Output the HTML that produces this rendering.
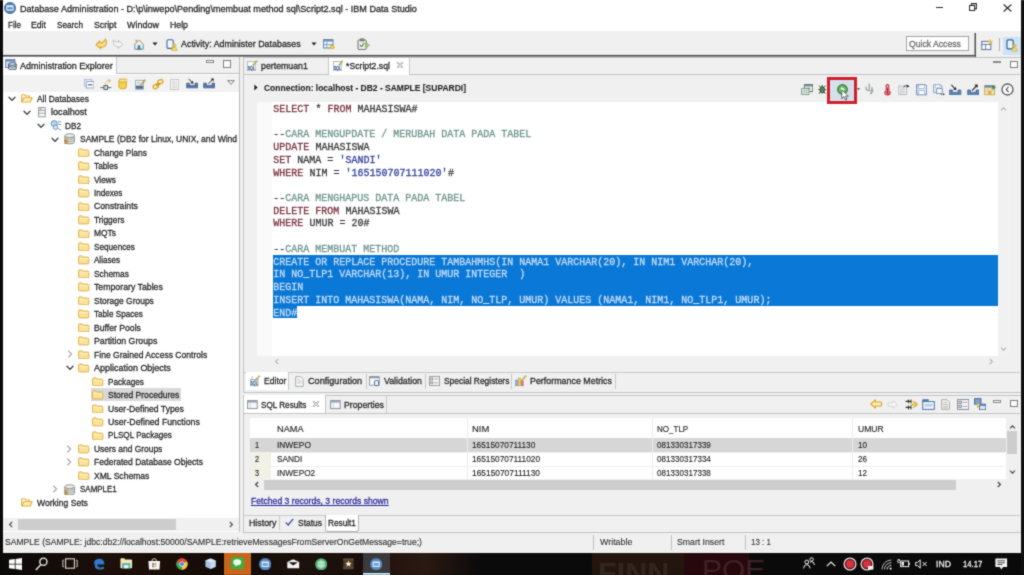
<!DOCTYPE html>
<html><head><meta charset="utf-8"><title>IBM Data Studio</title><style>
html,body{margin:0;padding:0}
body{width:1024px;height:575px;position:relative;overflow:hidden;background:#0a0a0a;font-family:"Liberation Sans",sans-serif;color:#222}
#w{position:absolute;left:0;top:-6px;width:1024px;height:587px;background:linear-gradient(#fff 0,#fff 20px,#0a0a0a 575px);filter:url(#sb)}
#c{position:absolute;left:0;top:6px;width:1024px;height:575px;background:#f0f0f0}
.b{position:absolute;display:block}
.t{position:absolute;white-space:pre;line-height:12px;transform-origin:0 50%;font-size:9.4px;-webkit-text-stroke:0.28px currentColor}
.m{font-family:"Liberation Mono",monospace}
</style></head><body>
<svg width="0" height="0" style="position:absolute"><filter id="sb" x="0" y="0" width="100%" height="100%" color-interpolation-filters="sRGB"><feConvolveMatrix order="3" kernelMatrix="0.03 0.1 0.03 0.1 0.48 0.1 0.03 0.1 0.03" divisor="1" edgeMode="duplicate" preserveAlpha="true"/></filter></svg>
<div id="w"><div id="c">
<div class="b" style="left:0px;top:0px;width:1024px;height:31px;background:#ffffff;"></div>
<div class="b" style="left:0px;top:31px;width:1024px;height:24px;background:#f0f0f0;"></div>
<div class="b" style="left:3px;top:55px;width:973px;height:1px;background:#505050;"></div>
<div class="b" style="left:3px;top:56px;width:973px;height:1px;background:#8c8c8c;"></div>
<div class="b" style="left:3px;top:54px;width:971px;height:1px;background:#e4e4e4;"></div>
<div class="b" style="left:975px;top:33px;width:1px;height:24px;background:#505050;"></div>
<div class="b" style="left:974px;top:33px;width:1px;height:22px;background:#a0a0a0;"></div>
<span class="t" style="left:20px;top:3.20px;font-size:9.4px;color:#262626;transform:scaleX(0.9691);">Database Administration - D:\p\inwepo\Pending\membuat method sql\Script2.sql - IBM Data Studio</span>
<span class="t" style="left:8px;top:18.70px;font-size:9.4px;color:#262626;transform:scaleX(0.8582);">File</span>
<span class="t" style="left:31px;top:18.70px;font-size:9.4px;color:#262626;transform:scaleX(0.9260);">Edit</span>
<span class="t" style="left:57px;top:18.70px;font-size:9.4px;color:#262626;transform:scaleX(0.8729);">Search</span>
<span class="t" style="left:93.5px;top:18.70px;font-size:9.4px;color:#262626;transform:scaleX(0.9364);">Script</span>
<span class="t" style="left:127px;top:18.70px;font-size:9.4px;color:#262626;transform:scaleX(0.9571);">Window</span>
<span class="t" style="left:170px;top:18.70px;font-size:9.4px;color:#262626;transform:scaleX(0.9310);">Help</span>
<span class="t" style="left:181px;top:38.20px;font-size:9.4px;color:#262626;transform:scaleX(0.9491);">Activity: Administer Databases</span>
<div class="b" style="left:905.5px;top:35.5px;width:63px;height:15.5px;background:#ffffff;border:1px solid #a5a5a5;box-sizing:border-box;"></div>
<span class="t" style="left:909px;top:37.70px;font-size:9.4px;color:#6a6a6a;transform:scaleX(0.9217);">Quick Access</span>
<div class="b" style="left:998.5px;top:38px;width:1px;height:13px;background:#b0b0b0;"></div>
<div class="b" style="left:1003px;top:36.5px;width:18.5px;height:18px;background:#cfe3f5;"></div>
<div class="b" style="left:3px;top:57px;width:237px;height:475px;background:#ffffff;"></div>
<div class="b" style="left:3px;top:57px;width:237px;height:16.5px;background:#f0f0f0;"></div>
<div class="b" style="left:3px;top:57px;width:112.5px;height:17px;background:#ffffff;"></div>
<div class="b" style="left:115.5px;top:57px;width:1px;height:16px;background:#c8c8c8;"></div>
<div class="b" style="left:115.5px;top:73px;width:124px;height:1px;background:#c0c0c0;"></div>
<div class="b" style="left:239px;top:57px;width:1px;height:475px;background:#bcbcbc;"></div>
<div class="b" style="left:3px;top:75px;width:236px;height:17px;background:#f2f2f3;"></div>
<span class="t" style="left:20px;top:59.70px;font-size:9.4px;color:#262626;transform:scaleX(0.9570);">Administration Explorer</span>
<div class="b" style="left:90.5px;top:388.14000000000004px;width:90px;height:13.3px;background:#d9d9d9;"></div>
<span class="t" style="left:37px;top:92.70px;font-size:9.4px;color:#262626;transform:scaleX(0.8966);">All Databases</span>
<span class="t" style="left:51px;top:106.17px;font-size:9.4px;color:#262626;transform:scaleX(0.9703);">localhost</span>
<span class="t" style="left:65px;top:119.64px;font-size:9.4px;color:#262626;transform:scaleX(0.8750);">DB2</span>
<span class="t" style="left:79.5px;top:133.11px;font-size:9.4px;color:#262626;transform:scaleX(0.9080);">SAMPLE (DB2 for Linux, UNIX, and Wind</span>
<span class="t" style="left:94px;top:146.58px;font-size:9.4px;color:#262626;transform:scaleX(0.8975);">Change Plans</span>
<span class="t" style="left:94px;top:160.05px;font-size:9.4px;color:#262626;transform:scaleX(0.8832);">Tables</span>
<span class="t" style="left:94px;top:173.52px;font-size:9.4px;color:#262626;transform:scaleX(0.8833);">Views</span>
<span class="t" style="left:94px;top:186.99px;font-size:9.4px;color:#262626;transform:scaleX(0.8656);">Indexes</span>
<span class="t" style="left:94px;top:200.46px;font-size:9.4px;color:#262626;transform:scaleX(0.9255);">Constraints</span>
<span class="t" style="left:94px;top:213.93px;font-size:9.4px;color:#262626;transform:scaleX(0.8937);">Triggers</span>
<span class="t" style="left:94px;top:227.40px;font-size:9.4px;color:#262626;transform:scaleX(0.8964);">MQTs</span>
<span class="t" style="left:94px;top:240.87px;font-size:9.4px;color:#262626;transform:scaleX(0.8716);">Sequences</span>
<span class="t" style="left:94px;top:254.34px;font-size:9.4px;color:#262626;transform:scaleX(0.8580);">Aliases</span>
<span class="t" style="left:94px;top:267.81px;font-size:9.4px;color:#262626;transform:scaleX(0.8932);">Schemas</span>
<span class="t" style="left:94px;top:281.28px;font-size:9.4px;color:#262626;transform:scaleX(0.9322);">Temporary Tables</span>
<span class="t" style="left:94px;top:294.75px;font-size:9.4px;color:#262626;transform:scaleX(0.9041);">Storage Groups</span>
<span class="t" style="left:94px;top:308.22px;font-size:9.4px;color:#262626;transform:scaleX(0.8682);">Table Spaces</span>
<span class="t" style="left:94px;top:321.69px;font-size:9.4px;color:#262626;transform:scaleX(0.9209);">Buffer Pools</span>
<span class="t" style="left:94px;top:335.16px;font-size:9.4px;color:#262626;transform:scaleX(0.9349);">Partition Groups</span>
<span class="t" style="left:94px;top:348.63px;font-size:9.4px;color:#262626;transform:scaleX(0.9128);">Fine Grained Access Controls</span>
<span class="t" style="left:94px;top:362.10px;font-size:9.4px;color:#262626;transform:scaleX(0.9569);">Application Objects</span>
<span class="t" style="left:108px;top:375.57px;font-size:9.4px;color:#262626;transform:scaleX(0.8720);">Packages</span>
<span class="t" style="left:108px;top:389.04px;font-size:9.4px;color:#262626;transform:scaleX(0.9122);">Stored Procedures</span>
<span class="t" style="left:108px;top:402.51px;font-size:9.4px;color:#262626;transform:scaleX(0.9168);">User-Defined Types</span>
<span class="t" style="left:108px;top:415.98px;font-size:9.4px;color:#262626;transform:scaleX(0.9317);">User-Defined Functions</span>
<span class="t" style="left:108px;top:429.45px;font-size:9.4px;color:#262626;transform:scaleX(0.8666);">PLSQL Packages</span>
<span class="t" style="left:93.5px;top:442.92px;font-size:9.4px;color:#262626;transform:scaleX(0.8980);">Users and Groups</span>
<span class="t" style="left:93.5px;top:456.39px;font-size:9.4px;color:#262626;transform:scaleX(0.9086);">Federated Database Objects</span>
<span class="t" style="left:93.5px;top:469.86px;font-size:9.4px;color:#262626;transform:scaleX(0.9132);">XML Schemas</span>
<span class="t" style="left:79.5px;top:483.33px;font-size:9.4px;color:#262626;transform:scaleX(0.8509);">SAMPLE1</span>
<span class="t" style="left:37px;top:496.80px;font-size:9.4px;color:#262626;transform:scaleX(0.9152);">Working Sets</span>
<div class="b" style="left:3px;top:517.5px;width:236px;height:13.5px;background:#f0f0f0;"></div>
<div class="b" style="left:17.5px;top:519px;width:158px;height:10.5px;background:#cdcdcd;"></div>
<div class="b" style="left:243px;top:57px;width:779px;height:335.5px;background:#f0f0f0;border:1px solid #c4c4c4;border-right:none;box-sizing:border-box;"></div>
<div class="b" style="left:244px;top:73.5px;width:776px;height:1px;background:#c4c4c4;"></div>
<div class="b" style="left:328.5px;top:57.5px;width:80px;height:17px;background:#ffffff;"></div>
<div class="b" style="left:328px;top:58px;width:1px;height:16px;background:#c8c8c8;"></div>
<div class="b" style="left:408.5px;top:58px;width:1px;height:16px;background:#c8c8c8;"></div>
<span class="t" style="left:261px;top:59.70px;font-size:9.4px;color:#262626;transform:scaleX(0.9368);">pertemuan1</span>
<span class="t" style="left:346px;top:59.70px;font-size:9.4px;color:#262626;transform:scaleX(0.9255);">*Script2.sql</span>
<span class="t" style="left:263.5px;top:81.70px;font-size:9.4px;font-weight:700;color:#222222;transform:scaleX(0.9046);-webkit-text-stroke:0.08px currentColor;">Connection: localhost - DB2 - SAMPLE [SUPARDI]</span>
<div class="b" style="left:257px;top:102px;width:741px;height:253.5px;background:#ffffff;"></div>
<div class="b" style="left:257px;top:102px;width:14.5px;height:253.5px;background:#fafafa;"></div>
<div class="b" style="left:998px;top:102px;width:12px;height:253.5px;background:#f1f1f1;"></div>
<div class="b" style="left:273px;top:255px;width:724.5px;height:51px;background:#0a78d6;"></div>
<div class="b" style="left:273px;top:305.8px;width:24px;height:12.6px;background:#0a78d6;"></div>
<span class="t m" style="left:273.3px;top:103.90px;font-size:10px;color:#7a3340;-webkit-text-stroke:0.3px currentColor;">SELECT</span>
<span class="t m" style="left:309.42px;top:103.90px;font-size:10px;color:#3a3a3a;-webkit-text-stroke:0.3px currentColor;"> * </span>
<span class="t m" style="left:327.48px;top:103.90px;font-size:10px;color:#7a3340;-webkit-text-stroke:0.3px currentColor;">FROM</span>
<span class="t m" style="left:351.56px;top:103.90px;font-size:10px;color:#3a3a3a;-webkit-text-stroke:0.3px currentColor;"> MAHASISWA#</span>
<span class="t m" style="left:273.3px;top:129.36px;font-size:10px;color:#3a3a3a;-webkit-text-stroke:0.3px currentColor;">--</span>
<span class="t m" style="left:285.34000000000003px;top:129.36px;font-size:10px;color:#6f968f;-webkit-text-stroke:0.3px currentColor;">CARA MENGUPDATE / MERUBAH DATA PADA TABEL</span>
<span class="t m" style="left:273.3px;top:142.09px;font-size:10px;color:#7a3340;-webkit-text-stroke:0.3px currentColor;">UPDATE</span>
<span class="t m" style="left:309.42px;top:142.09px;font-size:10px;color:#3a3a3a;-webkit-text-stroke:0.3px currentColor;"> MAHASISWA</span>
<span class="t m" style="left:273.3px;top:154.82px;font-size:10px;color:#7a3340;-webkit-text-stroke:0.3px currentColor;">SET</span>
<span class="t m" style="left:291.36px;top:154.82px;font-size:10px;color:#3a3a3a;-webkit-text-stroke:0.3px currentColor;"> NAMA = </span>
<span class="t m" style="left:339.52px;top:154.82px;font-size:10px;color:#34449a;-webkit-text-stroke:0.3px currentColor;">&#x27;SANDI&#x27;</span>
<span class="t m" style="left:273.3px;top:167.55px;font-size:10px;color:#7a3340;-webkit-text-stroke:0.3px currentColor;">WHERE</span>
<span class="t m" style="left:303.40000000000003px;top:167.55px;font-size:10px;color:#3a3a3a;-webkit-text-stroke:0.3px currentColor;"> NIM = </span>
<span class="t m" style="left:345.54px;top:167.55px;font-size:10px;color:#34449a;-webkit-text-stroke:0.3px currentColor;">&#x27;165150707111020&#x27;</span>
<span class="t m" style="left:447.88px;top:167.55px;font-size:10px;color:#3a3a3a;-webkit-text-stroke:0.3px currentColor;">#</span>
<span class="t m" style="left:273.3px;top:193.01px;font-size:10px;color:#3a3a3a;-webkit-text-stroke:0.3px currentColor;">--</span>
<span class="t m" style="left:285.34000000000003px;top:193.01px;font-size:10px;color:#6f968f;-webkit-text-stroke:0.3px currentColor;">CARA MENGHAPUS DATA PADA TABEL</span>
<span class="t m" style="left:273.3px;top:205.74px;font-size:10px;color:#7a3340;-webkit-text-stroke:0.3px currentColor;">DELETE FROM</span>
<span class="t m" style="left:339.52px;top:205.74px;font-size:10px;color:#3a3a3a;-webkit-text-stroke:0.3px currentColor;"> MAHASISWA</span>
<span class="t m" style="left:273.3px;top:218.47px;font-size:10px;color:#7a3340;-webkit-text-stroke:0.3px currentColor;">WHERE</span>
<span class="t m" style="left:303.40000000000003px;top:218.47px;font-size:10px;color:#3a3a3a;-webkit-text-stroke:0.3px currentColor;"> UMUR = 20#</span>
<span class="t m" style="left:273.3px;top:243.93px;font-size:10px;color:#3a3a3a;-webkit-text-stroke:0.3px currentColor;">--</span>
<span class="t m" style="left:285.34000000000003px;top:243.93px;font-size:10px;color:#6f968f;-webkit-text-stroke:0.3px currentColor;">CARA MEMBUAT METHOD</span>
<span class="t m" style="left:273.3px;top:256.66px;font-size:10px;color:#c4dcf4;-webkit-text-stroke:0.3px currentColor;">CREATE OR REPLACE PROCEDURE TAMBAHMHS(IN NAMA1 VARCHAR(20), IN NIM1 VARCHAR(20),</span>
<span class="t m" style="left:273.3px;top:269.39px;font-size:10px;color:#c4dcf4;-webkit-text-stroke:0.3px currentColor;">IN NO_TLP1 VARCHAR(13), IN UMUR INTEGER  )</span>
<span class="t m" style="left:273.3px;top:282.12px;font-size:10px;color:#c4dcf4;-webkit-text-stroke:0.3px currentColor;">BEGIN</span>
<span class="t m" style="left:273.3px;top:294.85px;font-size:10px;color:#c4dcf4;-webkit-text-stroke:0.3px currentColor;">INSERT INTO MAHASISWA(NAMA, NIM, NO_TLP, UMUR) VALUES (NAMA1, NIM1, NO_TLP1, UMUR);</span>
<span class="t m" style="left:273.3px;top:307.58px;font-size:10px;color:#c4dcf4;-webkit-text-stroke:0.3px currentColor;">END#</span>
<div class="b" style="left:244px;top:371.5px;width:776px;height:1px;background:#c8c8c8;"></div>
<div class="b" style="left:245.5px;top:372px;width:42.5px;height:18px;background:#ffffff;"></div>
<div class="b" style="left:288px;top:372.5px;width:1px;height:17px;background:#c8c8c8;"></div>
<div class="b" style="left:366px;top:374px;width:1px;height:15px;background:#c8c8c8;"></div>
<div class="b" style="left:425px;top:374px;width:1px;height:15px;background:#c8c8c8;"></div>
<div class="b" style="left:511px;top:374px;width:1px;height:15px;background:#c8c8c8;"></div>
<div class="b" style="left:614.5px;top:374px;width:1px;height:15px;background:#c8c8c8;"></div>
<span class="t" style="left:263.5px;top:375.40px;font-size:9.4px;color:#262626;transform:scaleX(0.9162);">Editor</span>
<span class="t" style="left:307.7px;top:375.40px;font-size:9.4px;color:#262626;transform:scaleX(0.9711);">Configuration</span>
<span class="t" style="left:384px;top:375.40px;font-size:9.4px;color:#262626;transform:scaleX(0.9362);">Validation</span>
<span class="t" style="left:443.5px;top:375.40px;font-size:9.4px;color:#262626;transform:scaleX(0.8955);">Special Registers</span>
<span class="t" style="left:529.6px;top:375.40px;font-size:9.4px;color:#262626;transform:scaleX(0.9479);">Performance Metrics</span>
<div class="b" style="left:243px;top:394.5px;width:779px;height:138px;background:#f0f0f0;border:1px solid #c4c4c4;border-right:none;box-sizing:border-box;"></div>
<div class="b" style="left:244px;top:412.5px;width:776px;height:1px;background:#c4c4c4;"></div>
<div class="b" style="left:244px;top:395px;width:81px;height:18px;background:#ffffff;"></div>
<div class="b" style="left:325px;top:395.5px;width:1px;height:17px;background:#c8c8c8;"></div>
<div class="b" style="left:386px;top:395.5px;width:1px;height:17px;background:#c8c8c8;"></div>
<span class="t" style="left:260.5px;top:399.20px;font-size:9.4px;color:#262626;transform:scaleX(0.8680);">SQL Results</span>
<span class="t" style="left:343.5px;top:399.20px;font-size:9.4px;color:#262626;transform:scaleX(0.9336);">Properties</span>
<div class="b" style="left:250px;top:417.5px;width:755.5px;height:61.5px;background:#ffffff;"></div>
<div class="b" style="left:250px;top:438px;width:21px;height:41px;background:#f1f1e6;"></div>
<div class="b" style="left:250px;top:438px;width:755.5px;height:13.6px;background:#d6d6d6;"></div>
<div class="b" style="left:467px;top:417.5px;width:1px;height:61.5px;background:#ececec;"></div>
<div class="b" style="left:652px;top:417.5px;width:1px;height:61.5px;background:#ececec;"></div>
<div class="b" style="left:852px;top:417.5px;width:1px;height:61.5px;background:#ececec;"></div>
<div class="b" style="left:271px;top:451.6px;width:734px;height:1px;background:#efefef;"></div>
<div class="b" style="left:271px;top:465.5px;width:734px;height:1px;background:#efefef;"></div>
<div class="b" style="left:1005.5px;top:417.5px;width:12.5px;height:61.5px;background:#f0f0f0;"></div>
<div class="b" style="left:1006.8px;top:431px;width:10.4px;height:23px;background:#cdcdcd;"></div>
<span class="t" style="left:277.2px;top:422.70px;font-size:9.4px;color:#262626;transform:scaleX(0.9794);-webkit-text-stroke:0.15px currentColor;">NAMA</span>
<span class="t" style="left:472px;top:422.70px;font-size:9.4px;color:#262626;transform:scaleX(1.0040);-webkit-text-stroke:0.15px currentColor;">NIM</span>
<span class="t" style="left:657.3px;top:422.70px;font-size:9.4px;color:#262626;transform:scaleX(0.8559);-webkit-text-stroke:0.15px currentColor;">NO_TLP</span>
<span class="t" style="left:857.7px;top:422.70px;font-size:9.4px;color:#262626;transform:scaleX(0.9150);-webkit-text-stroke:0.15px currentColor;">UMUR</span>
<span class="t" style="left:254.5px;top:439.20px;font-size:9.4px;color:#262626;transform:scaleX(0.7842);-webkit-text-stroke:0.15px currentColor;">1</span>
<span class="t" style="left:277.2px;top:439.20px;font-size:9.4px;color:#262626;transform:scaleX(0.8918);-webkit-text-stroke:0.15px currentColor;">INWEPO</span>
<span class="t" style="left:472px;top:439.20px;font-size:9.4px;color:#262626;transform:scaleX(0.8844);-webkit-text-stroke:0.15px currentColor;">16515070711130</span>
<span class="t" style="left:657.3px;top:439.20px;font-size:9.4px;color:#262626;transform:scaleX(0.8607);-webkit-text-stroke:0.15px currentColor;">081330317339</span>
<span class="t" style="left:857.7px;top:439.20px;font-size:9.4px;color:#262626;transform:scaleX(0.8607);-webkit-text-stroke:0.15px currentColor;">10</span>
<span class="t" style="left:254.5px;top:453.20px;font-size:9.4px;color:#262626;transform:scaleX(0.7842);-webkit-text-stroke:0.15px currentColor;">2</span>
<span class="t" style="left:277.2px;top:453.20px;font-size:9.4px;color:#262626;transform:scaleX(0.8841);-webkit-text-stroke:0.15px currentColor;">SANDI</span>
<span class="t" style="left:472px;top:453.20px;font-size:9.4px;color:#262626;transform:scaleX(0.8854);-webkit-text-stroke:0.15px currentColor;">165150707111020</span>
<span class="t" style="left:657.3px;top:453.20px;font-size:9.4px;color:#262626;transform:scaleX(0.8607);-webkit-text-stroke:0.15px currentColor;">081330317334</span>
<span class="t" style="left:857.7px;top:453.20px;font-size:9.4px;color:#262626;transform:scaleX(0.8607);-webkit-text-stroke:0.15px currentColor;">26</span>
<span class="t" style="left:254.5px;top:467.20px;font-size:9.4px;color:#262626;transform:scaleX(0.7842);-webkit-text-stroke:0.15px currentColor;">3</span>
<span class="t" style="left:277.2px;top:467.20px;font-size:9.4px;color:#262626;transform:scaleX(0.8835);-webkit-text-stroke:0.15px currentColor;">INWEPO2</span>
<span class="t" style="left:472px;top:467.20px;font-size:9.4px;color:#262626;transform:scaleX(0.8935);-webkit-text-stroke:0.15px currentColor;">165150707111130</span>
<span class="t" style="left:657.3px;top:467.20px;font-size:9.4px;color:#262626;transform:scaleX(0.8607);-webkit-text-stroke:0.15px currentColor;">081330317338</span>
<span class="t" style="left:857.7px;top:467.20px;font-size:9.4px;color:#262626;transform:scaleX(0.8607);-webkit-text-stroke:0.15px currentColor;">12</span>
<div class="b" style="left:244px;top:479px;width:776px;height:11px;background:#f0f0f0;"></div>
<div class="b" style="left:263.5px;top:479.5px;width:692px;height:10.5px;background:#cdcdcd;"></div>
<span class="t" style="left:251px;top:495.20px;font-size:9.4px;color:#2a2a9c;transform:scaleX(0.9203);text-decoration:underline;">Fetched 3 records, 3 records shown</span>
<div class="b" style="left:244px;top:514.5px;width:776px;height:1px;background:#c8c8c8;"></div>
<div class="b" style="left:325px;top:515px;width:33.5px;height:16.5px;background:#ffffff;border:1px solid #b4b4b4;border-top:none;box-sizing:border-box;border-radius:0 0 3px 3px;"></div>
<div class="b" style="left:279px;top:516px;width:1px;height:14px;background:#c8c8c8;"></div>
<span class="t" style="left:248.5px;top:516.70px;font-size:9.4px;color:#262626;transform:scaleX(0.9403);">History</span>
<span class="t" style="left:298px;top:516.70px;font-size:9.4px;color:#262626;transform:scaleX(0.9006);">Status</span>
<span class="t" style="left:328px;top:516.70px;font-size:9.4px;color:#262626;transform:scaleX(0.8785);">Result1</span>
<div class="b" style="left:3px;top:532.5px;width:1018px;height:20px;background:#f0f0f0;"></div>
<span class="t" style="left:5px;top:535.70px;font-size:9.4px;color:#333;transform:scaleX(0.9149);-webkit-text-stroke:0.15px currentColor;">SAMPLE (SAMPLE: jdbc:db2://localhost:50000/SAMPLE:retrieveMessagesFromServerOnGetMessage=true;)</span>
<div class="b" style="left:593px;top:535px;width:1px;height:15px;background:#c0c0c0;"></div>
<div class="b" style="left:671px;top:535px;width:1px;height:15px;background:#c0c0c0;"></div>
<div class="b" style="left:744.5px;top:535px;width:1px;height:15px;background:#c0c0c0;"></div>
<span class="t" style="left:599.5px;top:535.70px;font-size:9.4px;color:#333;transform:scaleX(0.9474);-webkit-text-stroke:0.12px currentColor;">Writable</span>
<span class="t" style="left:677px;top:535.70px;font-size:9.4px;color:#333;transform:scaleX(0.9279);-webkit-text-stroke:0.12px currentColor;">Smart Insert</span>
<span class="t" style="left:750.5px;top:535.70px;font-size:9.4px;color:#333;transform:scaleX(0.8504);-webkit-text-stroke:0.12px currentColor;">13 : 1</span>
<div class="b" style="left:0px;top:552.6px;width:1024px;height:22.4px;background:#0b0a0b;"></div>
<div class="b" style="left:3px;top:552.6px;width:221px;height:22.4px;background:linear-gradient(90deg,#0c0a0a 0%,#140c09 25%,#1d0f09 45%,#1a0d08 80%,#120a08 100%);"></div>
<div class="b" style="left:251px;top:552.6px;width:112px;height:22.4px;background:linear-gradient(90deg,#160d0a 0%,#1c110c 50%,#1a0f0a 100%);"></div>
<div class="b" style="left:390px;top:552.6px;width:90px;height:22.4px;background:linear-gradient(90deg,#24140e 0%,#2a1912 40%,#0c0a0b 100%);"></div>
<div class="b" style="left:591.7px;top:552.6px;width:92.7px;height:22.4px;background:#24160f;"></div>
<div class="b" style="left:684.4px;top:552.6px;width:64.6px;height:22.4px;background:#27090d;"></div>
<div class="b" style="left:224px;top:552.6px;width:27.3px;height:22.4px;background:#c8641c;"></div>
<div class="b" style="left:362.7px;top:552.6px;width:27.3px;height:22.4px;background:#3b393b;"></div>
<div class="b" style="left:362.7px;top:572.6px;width:27.3px;height:2.4px;background:#c4e8f6;"></div>
<span class="t" style="left:935.9px;top:557.80px;font-size:9.4px;color:#f2f2f2;transform:scaleX(0.9204);">IND</span>
<span class="t" style="left:962.6px;top:557.80px;font-size:9.4px;color:#f2f2f2;transform:scaleX(0.8247);">14.17</span>
<span class="t" style="left:598px;top:567.4px;font-size:30px;font-weight:700;color:#33251f;-webkit-text-stroke:0;transform:scaleX(1.02)">FINN</span>
<span class="t" style="left:702px;top:564px;font-size:30px;color:#3f2126;-webkit-text-stroke:0;">POE</span>
<div class="b" style="left:0px;top:0px;width:2.8px;height:575px;background:#0a0a0a;"></div>
<div class="b" style="left:1021.4px;top:0px;width:2.6px;height:575px;background:#101010;"></div>
<svg class="b" style="left:3.8px;top:2.2px;" width="12" height="12" viewBox="0 0 12 12"><circle cx="6" cy="6" r="5.7" fill="#4a7fb0" stroke="#34608a" stroke-width="0.6"/><rect x="2.4" y="3.3" width="7.2" height="5.4" rx="0.8" fill="#e6f0fa"/><rect x="3.4" y="5.2" width="5.2" height="2.2" fill="#5a8cc0"/></svg>
<div class="b" style="left:935.7px;top:7.1px;width:7.4px;height:1.1px;background:#2a2a2a;"></div>
<svg class="b" style="left:968.8px;top:3.3px;" width="8" height="8" viewBox="0 0 8 8"><path d="M0.6 2.4 H5.6 V7.4 H0.6 Z M2.4 2.2 V0.6 H7.4 V5.6 H5.8" fill="none" stroke="#2a2a2a" stroke-width="1.05"/></svg>
<svg class="b" style="left:1002.7px;top:3.5px;" width="9" height="8" viewBox="0 0 9 8"><path d="M0.6 0.5 L8.4 7.5 M8.4 0.5 L0.6 7.5" stroke="#2a2a2a" stroke-width="1.1"/></svg>
<svg class="b" style="left:94.5px;top:38.45px;" width="13" height="11.5" viewBox="0 0 13 11.5"><path d="M1 6.8 L4.6 3 L5 5 Q9 4.6 10.4 1 Q13 6 9.4 8.6 Q7.4 9.8 5.6 8.8 L5.8 10.8 Z" fill="#f9e08a" stroke="#d9a62e" stroke-width="1.1" stroke-linejoin="round"/></svg>
<svg class="b" style="left:111.65px;top:38.75px;" width="11.5" height="10.5" viewBox="0 0 11.5 10.5"><path d="M10.6 5.6 L6.6 1.4 L6.4 3.4 Q3.2 3 1.2 1 Q0.6 4.4 2.6 6.4 Q4.4 7.8 6.2 7.4 L6 9.6 Z" fill="#f6f6f6" stroke="#bdbdbd" stroke-width="0.9" stroke-linejoin="round"/></svg>
<svg class="b" style="left:133.5px;top:38.5px;" width="10" height="11" viewBox="0 0 10 11"><path d="M0.8 5.4 L5 1.2 L9.2 5.4 V10.2 H0.8 Z" fill="#eef3f7" stroke="#5b7f9c" stroke-width="0.9" stroke-linejoin="round"/><path d="M2.2 2.6 V0.8" stroke="#8a6a30" stroke-width="1"/><path d="M0.6 5.2 L5 0.9 L9.4 5.2" fill="none" stroke="#d6a640" stroke-width="1"/><rect x="3.6" y="6.2" width="2.8" height="4" fill="#4d7fae"/><rect x="3" y="9.6" width="4" height="1" fill="#3d8a4a"/></svg>
<svg class="b" style="left:152.0px;top:42.2px;" width="6" height="4" viewBox="0 0 6 4"><path d="M0.4 0.6 H5.6 L3 3.6 Z" fill="#222"/></svg>
<svg class="b" style="left:165.8px;top:38.5px;" width="12" height="12" viewBox="0 0 12 12"><rect x="1" y="0.8" width="6.2" height="8.6" rx="1.2" fill="#f2f6fa" stroke="#3d6a96" stroke-width="1.1"/><circle cx="8.4" cy="6.2" r="1.5" fill="#f0d050" stroke="#c9a020" stroke-width="0.6"/><path d="M5.6 11.4 Q5.8 8 8.4 8 Q11 8 11.2 11.4 Z" fill="#f3dc6a" stroke="#c9a020" stroke-width="0.6"/></svg>
<svg class="b" style="left:310.7px;top:42.2px;" width="6" height="4" viewBox="0 0 6 4"><path d="M0.4 0.6 H5.6 L3 3.6 Z" fill="#222"/></svg>
<svg class="b" style="left:322.6px;top:38.55px;" width="12" height="10.5" viewBox="0 0 12 10.5"><rect x="0.6" y="0.6" width="9.4" height="8.4" fill="#f4f8fb" stroke="#51799f" stroke-width="0.9"/><rect x="0.6" y="0.6" width="9.4" height="2" fill="#6d93b8"/><path d="M3.8 2.6 V9 M0.6 5.6 H10" stroke="#6d93b8" stroke-width="0.8"/><path d="M7 6.6 H10.2 L11.6 8.2 L10.2 9.9 H7 Z" fill="#f1cf4e" stroke="#c99c20" stroke-width="0.6"/></svg>
<svg class="b" style="left:356.5px;top:37.75px;" width="13" height="12.5" viewBox="0 0 13 12.5"><rect x="1" y="2" width="8.2" height="9.6" rx="0.8" fill="#e9ebe4" stroke="#6b7360" stroke-width="1"/><rect x="3.2" y="0.7" width="3.8" height="2.4" rx="0.7" fill="#8d947f" stroke="#5d6552" stroke-width="0.6"/><path d="M3 7 L4.6 8.8 L7.2 5" fill="none" stroke="#3c4a3a" stroke-width="1"/><path d="M9 4.4 L12.4 7.2 L9 10 Z" fill="#9fd07a" stroke="#6aa54c" stroke-width="0.6"/></svg>
<svg class="b" style="left:981.4px;top:39.25px;" width="12" height="11.5" viewBox="0 0 12 11.5"><rect x="0.8" y="2.4" width="9" height="8.2" fill="#fbfcfd" stroke="#5c6f9a" stroke-width="1"/><path d="M0.8 5.4 H9.8 M4.6 5.4 V10.6" stroke="#5c6f9a" stroke-width="0.9"/><path d="M9.2 0.4 L10 2 L11.6 2.3 L10.4 3.4 L10.7 5 L9.2 4.2 L7.8 5 L8.1 3.4 L6.9 2.3 L8.5 2 Z" fill="#f4cf5a" stroke="#d1a12a" stroke-width="0.4"/></svg>
<svg class="b" style="left:1005.8px;top:39.0px;" width="12" height="13" viewBox="0 0 12 13"><rect x="1" y="0.9" width="6.2" height="9" rx="1.3" fill="#eaf2fa" stroke="#2f5f90" stroke-width="1.2"/><circle cx="8.6" cy="6.6" r="1.5" fill="#f0d050" stroke="#c9a020" stroke-width="0.6"/><path d="M5.8 12.2 Q6 8.6 8.6 8.6 Q11.2 8.6 11.4 12.2 Z" fill="#f3dc6a" stroke="#b9b04a" stroke-width="0.6"/></svg>
<svg class="b" style="left:5.3px;top:58.65px;" width="12" height="11.5" viewBox="0 0 12 11.5"><rect x="0.6" y="0.6" width="9.4" height="8" fill="#d3e4f3" stroke="#5b7fa3" stroke-width="0.9"/><rect x="0.6" y="0.6" width="9.4" height="2" fill="#6d90b4"/><path d="M3.6 5 V9.8 Q3.6 10.9 7.4 10.9 Q11.2 10.9 11.2 9.8 V5" fill="#c9d6e2" stroke="#33495f" stroke-width="0.9"/><ellipse cx="7.4" cy="5" rx="3.8" ry="1.3" fill="#e9eff5" stroke="#33495f" stroke-width="0.9"/><path d="M3.6 7.4 Q7.4 9.2 11.2 7.4" fill="none" stroke="#33495f" stroke-width="0.7"/></svg>
<div class="b" style="left:206.4px;top:60.4px;width:7.4px;height:2.8px;border:0.9px solid #8a8a8a;box-sizing:border-box;background:#fafafa;"></div>
<div class="b" style="left:223.2px;top:60.4px;width:7.6px;height:7.2px;border:0.9px solid #808080;border-top-width:1.8px;box-sizing:border-box;background:#fcfcfc;"></div>
<svg class="b" style="left:83.75px;top:79.4px;" width="10.5" height="9.6" viewBox="0 0 10.5 9.6"><rect x="0.5" y="0.5" width="7.4" height="6.4" fill="#eef3f8" stroke="#9db4ca" stroke-width="0.8"/><rect x="2.3" y="2.5" width="7.6" height="6.5" fill="#fbfdff" stroke="#86a2bd" stroke-width="0.9"/><path d="M4 5.8 H8.3" stroke="#3a5470" stroke-width="1.1"/></svg>
<svg class="b" style="left:100.2px;top:79.1px;" width="12" height="11" viewBox="0 0 12 11"><path d="M5.6 5.4 Q5.6 1.2 9.4 1.6" fill="none" stroke="#d4a83a" stroke-width="1" stroke-dasharray="1.4 0.9"/><path d="M8.4 0.4 L10.6 1.8 L8.6 3.4" fill="none" stroke="#d4a83a" stroke-width="0.9"/><path d="M0.4 8.6 H11.4" stroke="#5c6f66" stroke-width="1"/><rect x="4" y="6.6" width="3.6" height="3.8" fill="#dfe6e0" stroke="#3e5048" stroke-width="0.9"/></svg>
<svg class="b" style="left:117.75px;top:78.05px;" width="10.5" height="11.5" viewBox="0 0 10.5 11.5"><path d="M0.9 2.6 V9.2 Q0.9 10.8 4.6 10.8 Q8.3 10.8 8.3 9.2 V2.6" fill="#f6d24e" stroke="#d3a223" stroke-width="0.9"/><ellipse cx="4.6" cy="2.6" rx="3.7" ry="1.7" fill="#fbe68a" stroke="#d3a223" stroke-width="0.9"/><path d="M8 0.4 L8.6 1.6 L9.9 1.8 L9 2.7 L9.2 4 L8 3.4 L6.9 4 L7.1 2.7 L6.2 1.8 L7.5 1.6 Z" fill="#fff3b0" stroke="#d3a223" stroke-width="0.4"/></svg>
<svg class="b" style="left:135.15px;top:78.7px;" width="10.5" height="11" viewBox="0 0 10.5 11"><rect x="0.7" y="1.3" width="7.6" height="9" fill="#f8f9fa" stroke="#8c99a6" stroke-width="0.8"/><path d="M2 3.4 H6 M2 5 H5" stroke="#a9b3bd" stroke-width="0.7"/><rect x="0.9" y="6.6" width="7.2" height="3.2" fill="#4d6f96"/><path d="M9.8 0.6 L6 4.8 L5.6 6 L6.8 5.6 L10.4 1.4 Z" fill="#e9c44a" stroke="#7d6a2c" stroke-width="0.5"/></svg>
<svg class="b" style="left:151.6px;top:78.9px;" width="12" height="11" viewBox="0 0 12 11"><rect x="5.4" y="0.9" width="5.6" height="4" rx="2" transform="rotate(-28 8.2 2.9)" fill="#fbe9a0" stroke="#d6a22a" stroke-width="1.2"/><rect x="1" y="5.4" width="5.6" height="4" rx="2" transform="rotate(-28 3.8 7.4)" fill="#fbe9a0" stroke="#d6a22a" stroke-width="1.2"/><path d="M4.2 7 L8 4" stroke="#c58f1c" stroke-width="1.3"/></svg>
<svg class="b" style="left:169.75px;top:78.5px;" width="9.5" height="11" viewBox="0 0 9.5 11"><rect x="0.6" y="0.6" width="8.2" height="9.8" fill="#f6f6f6" stroke="#bdbdbd" stroke-width="0.8"/><path d="M2 2.8 H7.4 M2 4.8 H7.4 M2 6.8 H7.4 M2 8.6 H7.4" stroke="#c9c9c9" stroke-width="0.7"/><path d="M3.4 0.8 V10.2" stroke="#d2d2d2" stroke-width="0.6"/></svg>
<svg class="b" style="left:185.55px;top:78.35px;" width="12.5" height="10.5" viewBox="0 0 12.5 10.5"><path d="M0.7 5.2 V9.8 H11.8 V5.2 H9 V7.4 H3.4 V5.2 Z" fill="#5578a4" stroke="#3d5f8c" stroke-width="0.8" stroke-linejoin="round"/><path d="M2.6 0.8 L6.4 4.8" stroke="#333" stroke-width="1"/><path d="M4.4 5.2 L7.4 5.8 L6.8 2.8 Z" fill="#222"/></svg>
<svg class="b" style="left:202.75px;top:78.35px;" width="12.5" height="10.5" viewBox="0 0 12.5 10.5"><path d="M0.7 5.2 V9.8 H11.8 V5.2 H9 V7.4 H3.4 V5.2 Z" fill="#5578a4" stroke="#3d5f8c" stroke-width="0.8" stroke-linejoin="round"/><path d="M5.4 5.8 L9.6 1.6" stroke="#333" stroke-width="1"/><path d="M7.6 0.6 L10.8 0.4 L10.4 3.6 Z" fill="#222"/></svg>
<svg class="b" style="left:226.8px;top:79.5px;" width="8.4" height="5" viewBox="0 0 8.4 5"><path d="M0.7 0.7 H7.3 L4 4.3 Z" fill="#fafafa" stroke="#6e6e6e" stroke-width="0.9" stroke-linejoin="round"/></svg>
<svg class="b" style="left:8.4px;top:95.9px;" width="8" height="6" viewBox="0 0 8 6"><path d="M1 1.2 L4 4.4 L7 1.2" fill="none" stroke="#404040" stroke-width="1.35" stroke-linecap="round" stroke-linejoin="round"/></svg>
<svg class="b" style="left:21.3px;top:94.2px;" width="12" height="9" viewBox="0 0 12 9"><path d="M0.7 7.8 V1.6 Q0.7 0.8 1.5 0.8 H3.8 L4.8 2 H8.4 V3.6" fill="none" stroke="#e0aa3a" stroke-width="1.1"/><path d="M0.8 8 L2.8 3.7 H11.2 L9.2 8 Z" fill="#fdf0b8" stroke="#e0aa3a" stroke-width="1.1" stroke-linejoin="round"/></svg>
<svg class="b" style="left:22.6px;top:109.57px;" width="8" height="6" viewBox="0 0 8 6"><path d="M1 1.2 L4 4.4 L7 1.2" fill="none" stroke="#404040" stroke-width="1.35" stroke-linecap="round" stroke-linejoin="round"/></svg>
<svg class="b" style="left:37.6px;top:106.97px;" width="8" height="10.6" viewBox="0 0 8 10.6"><rect x="0.6" y="0.6" width="6.6" height="9.2" fill="#fbfbfb" stroke="#8a8d90" stroke-width="0.9"/><path d="M0.6 3.4 H7.2 M0.6 6.2 H7.2" stroke="#8a8d90" stroke-width="0.8"/><rect x="1.8" y="1.5" width="1.8" height="1" fill="#6a6d70"/></svg>
<svg class="b" style="left:37.0px;top:123.24px;" width="8" height="6" viewBox="0 0 8 6"><path d="M1 1.2 L4 4.4 L7 1.2" fill="none" stroke="#404040" stroke-width="1.35" stroke-linecap="round" stroke-linejoin="round"/></svg>
<svg class="b" style="left:49.6px;top:120.03999999999999px;" width="12" height="11" viewBox="0 0 12 11"><circle cx="4.2" cy="3.6" r="3" fill="#b9d3ec" stroke="#5d8bb8" stroke-width="0.9"/><circle cx="5.6" cy="7.4" r="2.2" fill="#d6e6f5" stroke="#5d8bb8" stroke-width="0.8"/><path d="M7.6 1.8 H11 M8 4.4 H11.4 M8.4 8.6 L11 10" stroke="#6b8fb4" stroke-width="0.9"/></svg>
<svg class="b" style="left:51.0px;top:136.71px;" width="8" height="6" viewBox="0 0 8 6"><path d="M1 1.2 L4 4.4 L7 1.2" fill="none" stroke="#404040" stroke-width="1.35" stroke-linecap="round" stroke-linejoin="round"/></svg>
<svg class="b" style="left:63.8px;top:133.31px;" width="11.5" height="11.5" viewBox="0 0 11.5 11.5"><path d="M0.8 2.6 V9 Q0.8 10.9 5.7 10.9 Q10.6 10.9 10.6 9 V2.6" fill="#d9d9d6" stroke="#8c8c88" stroke-width="0.9"/><ellipse cx="5.7" cy="2.6" rx="4.9" ry="1.9" fill="#ecece8" stroke="#8c8c88" stroke-width="0.9"/><path d="M0.8 5 Q5.7 7.6 10.6 5 M0.8 7.3 Q5.7 9.9 10.6 7.3" fill="none" stroke="#9a9a96" stroke-width="0.7"/><rect x="0.4" y="6.4" width="3.2" height="4.6" fill="#b98f45"/></svg>
<svg class="b" style="left:78.4px;top:147.68px;" width="11.5" height="9.5" viewBox="0 0 11.5 9.5"><path d="M0.6 1.9 Q0.6 0.9 1.6 0.9 H4 L5.1 2.1 H9.8 Q10.8 2.1 10.8 3.1 V7.9 Q10.8 8.9 9.8 8.9 H1.6 Q0.6 8.9 0.6 7.9 Z" fill="#fae29a" stroke="#dcae45" stroke-width="0.95"/><path d="M1 3.6 H10.4" stroke="#fff4c8" stroke-width="0.8"/></svg>
<svg class="b" style="left:78.4px;top:161.15000000000003px;" width="11.5" height="9.5" viewBox="0 0 11.5 9.5"><path d="M0.6 1.9 Q0.6 0.9 1.6 0.9 H4 L5.1 2.1 H9.8 Q10.8 2.1 10.8 3.1 V7.9 Q10.8 8.9 9.8 8.9 H1.6 Q0.6 8.9 0.6 7.9 Z" fill="#fae29a" stroke="#dcae45" stroke-width="0.95"/><path d="M1 3.6 H10.4" stroke="#fff4c8" stroke-width="0.8"/></svg>
<svg class="b" style="left:78.4px;top:174.62px;" width="11.5" height="9.5" viewBox="0 0 11.5 9.5"><path d="M0.6 1.9 Q0.6 0.9 1.6 0.9 H4 L5.1 2.1 H9.8 Q10.8 2.1 10.8 3.1 V7.9 Q10.8 8.9 9.8 8.9 H1.6 Q0.6 8.9 0.6 7.9 Z" fill="#fae29a" stroke="#dcae45" stroke-width="0.95"/><path d="M1 3.6 H10.4" stroke="#fff4c8" stroke-width="0.8"/></svg>
<svg class="b" style="left:78.4px;top:188.09000000000003px;" width="11.5" height="9.5" viewBox="0 0 11.5 9.5"><path d="M0.6 1.9 Q0.6 0.9 1.6 0.9 H4 L5.1 2.1 H9.8 Q10.8 2.1 10.8 3.1 V7.9 Q10.8 8.9 9.8 8.9 H1.6 Q0.6 8.9 0.6 7.9 Z" fill="#fae29a" stroke="#dcae45" stroke-width="0.95"/><path d="M1 3.6 H10.4" stroke="#fff4c8" stroke-width="0.8"/></svg>
<svg class="b" style="left:78.4px;top:201.56px;" width="11.5" height="9.5" viewBox="0 0 11.5 9.5"><path d="M0.6 1.9 Q0.6 0.9 1.6 0.9 H4 L5.1 2.1 H9.8 Q10.8 2.1 10.8 3.1 V7.9 Q10.8 8.9 9.8 8.9 H1.6 Q0.6 8.9 0.6 7.9 Z" fill="#fae29a" stroke="#dcae45" stroke-width="0.95"/><path d="M1 3.6 H10.4" stroke="#fff4c8" stroke-width="0.8"/></svg>
<svg class="b" style="left:78.4px;top:215.03000000000003px;" width="11.5" height="9.5" viewBox="0 0 11.5 9.5"><path d="M0.6 1.9 Q0.6 0.9 1.6 0.9 H4 L5.1 2.1 H9.8 Q10.8 2.1 10.8 3.1 V7.9 Q10.8 8.9 9.8 8.9 H1.6 Q0.6 8.9 0.6 7.9 Z" fill="#fae29a" stroke="#dcae45" stroke-width="0.95"/><path d="M1 3.6 H10.4" stroke="#fff4c8" stroke-width="0.8"/></svg>
<svg class="b" style="left:78.4px;top:228.50000000000003px;" width="11.5" height="9.5" viewBox="0 0 11.5 9.5"><path d="M0.6 1.9 Q0.6 0.9 1.6 0.9 H4 L5.1 2.1 H9.8 Q10.8 2.1 10.8 3.1 V7.9 Q10.8 8.9 9.8 8.9 H1.6 Q0.6 8.9 0.6 7.9 Z" fill="#fae29a" stroke="#dcae45" stroke-width="0.95"/><path d="M1 3.6 H10.4" stroke="#fff4c8" stroke-width="0.8"/></svg>
<svg class="b" style="left:78.4px;top:241.97000000000003px;" width="11.5" height="9.5" viewBox="0 0 11.5 9.5"><path d="M0.6 1.9 Q0.6 0.9 1.6 0.9 H4 L5.1 2.1 H9.8 Q10.8 2.1 10.8 3.1 V7.9 Q10.8 8.9 9.8 8.9 H1.6 Q0.6 8.9 0.6 7.9 Z" fill="#fae29a" stroke="#dcae45" stroke-width="0.95"/><path d="M1 3.6 H10.4" stroke="#fff4c8" stroke-width="0.8"/></svg>
<svg class="b" style="left:78.4px;top:255.44px;" width="11.5" height="9.5" viewBox="0 0 11.5 9.5"><path d="M0.6 1.9 Q0.6 0.9 1.6 0.9 H4 L5.1 2.1 H9.8 Q10.8 2.1 10.8 3.1 V7.9 Q10.8 8.9 9.8 8.9 H1.6 Q0.6 8.9 0.6 7.9 Z" fill="#fae29a" stroke="#dcae45" stroke-width="0.95"/><path d="M1 3.6 H10.4" stroke="#fff4c8" stroke-width="0.8"/></svg>
<svg class="b" style="left:78.4px;top:268.91px;" width="11.5" height="9.5" viewBox="0 0 11.5 9.5"><path d="M0.6 1.9 Q0.6 0.9 1.6 0.9 H4 L5.1 2.1 H9.8 Q10.8 2.1 10.8 3.1 V7.9 Q10.8 8.9 9.8 8.9 H1.6 Q0.6 8.9 0.6 7.9 Z" fill="#fae29a" stroke="#dcae45" stroke-width="0.95"/><path d="M1 3.6 H10.4" stroke="#fff4c8" stroke-width="0.8"/></svg>
<svg class="b" style="left:78.4px;top:282.38000000000005px;" width="11.5" height="9.5" viewBox="0 0 11.5 9.5"><path d="M0.6 1.9 Q0.6 0.9 1.6 0.9 H4 L5.1 2.1 H9.8 Q10.8 2.1 10.8 3.1 V7.9 Q10.8 8.9 9.8 8.9 H1.6 Q0.6 8.9 0.6 7.9 Z" fill="#fae29a" stroke="#dcae45" stroke-width="0.95"/><path d="M1 3.6 H10.4" stroke="#fff4c8" stroke-width="0.8"/></svg>
<svg class="b" style="left:78.4px;top:295.85px;" width="11.5" height="9.5" viewBox="0 0 11.5 9.5"><path d="M0.6 1.9 Q0.6 0.9 1.6 0.9 H4 L5.1 2.1 H9.8 Q10.8 2.1 10.8 3.1 V7.9 Q10.8 8.9 9.8 8.9 H1.6 Q0.6 8.9 0.6 7.9 Z" fill="#fae29a" stroke="#dcae45" stroke-width="0.95"/><path d="M1 3.6 H10.4" stroke="#fff4c8" stroke-width="0.8"/></svg>
<svg class="b" style="left:78.4px;top:309.32px;" width="11.5" height="9.5" viewBox="0 0 11.5 9.5"><path d="M0.6 1.9 Q0.6 0.9 1.6 0.9 H4 L5.1 2.1 H9.8 Q10.8 2.1 10.8 3.1 V7.9 Q10.8 8.9 9.8 8.9 H1.6 Q0.6 8.9 0.6 7.9 Z" fill="#fae29a" stroke="#dcae45" stroke-width="0.95"/><path d="M1 3.6 H10.4" stroke="#fff4c8" stroke-width="0.8"/></svg>
<svg class="b" style="left:78.4px;top:322.79px;" width="11.5" height="9.5" viewBox="0 0 11.5 9.5"><path d="M0.6 1.9 Q0.6 0.9 1.6 0.9 H4 L5.1 2.1 H9.8 Q10.8 2.1 10.8 3.1 V7.9 Q10.8 8.9 9.8 8.9 H1.6 Q0.6 8.9 0.6 7.9 Z" fill="#fae29a" stroke="#dcae45" stroke-width="0.95"/><path d="M1 3.6 H10.4" stroke="#fff4c8" stroke-width="0.8"/></svg>
<svg class="b" style="left:78.4px;top:336.26000000000005px;" width="11.5" height="9.5" viewBox="0 0 11.5 9.5"><path d="M0.6 1.9 Q0.6 0.9 1.6 0.9 H4 L5.1 2.1 H9.8 Q10.8 2.1 10.8 3.1 V7.9 Q10.8 8.9 9.8 8.9 H1.6 Q0.6 8.9 0.6 7.9 Z" fill="#fae29a" stroke="#dcae45" stroke-width="0.95"/><path d="M1 3.6 H10.4" stroke="#fff4c8" stroke-width="0.8"/></svg>
<svg class="b" style="left:78.4px;top:349.73px;" width="11.5" height="9.5" viewBox="0 0 11.5 9.5"><path d="M0.6 1.9 Q0.6 0.9 1.6 0.9 H4 L5.1 2.1 H9.8 Q10.8 2.1 10.8 3.1 V7.9 Q10.8 8.9 9.8 8.9 H1.6 Q0.6 8.9 0.6 7.9 Z" fill="#fae29a" stroke="#dcae45" stroke-width="0.95"/><path d="M1 3.6 H10.4" stroke="#fff4c8" stroke-width="0.8"/></svg>
<svg class="b" style="left:78.4px;top:363.20000000000005px;" width="11.5" height="9.5" viewBox="0 0 11.5 9.5"><path d="M0.6 1.9 Q0.6 0.9 1.6 0.9 H4 L5.1 2.1 H9.8 Q10.8 2.1 10.8 3.1 V7.9 Q10.8 8.9 9.8 8.9 H1.6 Q0.6 8.9 0.6 7.9 Z" fill="#fae29a" stroke="#dcae45" stroke-width="0.95"/><path d="M1 3.6 H10.4" stroke="#fff4c8" stroke-width="0.8"/></svg>
<svg class="b" style="left:66.6px;top:350.43px;" width="6" height="8" viewBox="0 0 6 8"><path d="M1.6 1 L4.6 4 L1.6 7" fill="none" stroke="#a6a6a6" stroke-width="1.1" stroke-linecap="round" stroke-linejoin="round"/></svg>
<svg class="b" style="left:65.6px;top:365.3px;" width="8" height="6" viewBox="0 0 8 6"><path d="M1 1.2 L4 4.4 L7 1.2" fill="none" stroke="#404040" stroke-width="1.35" stroke-linecap="round" stroke-linejoin="round"/></svg>
<svg class="b" style="left:92.4px;top:376.67px;" width="11.5" height="9.5" viewBox="0 0 11.5 9.5"><path d="M0.6 1.9 Q0.6 0.9 1.6 0.9 H4 L5.1 2.1 H9.8 Q10.8 2.1 10.8 3.1 V7.9 Q10.8 8.9 9.8 8.9 H1.6 Q0.6 8.9 0.6 7.9 Z" fill="#fae29a" stroke="#dcae45" stroke-width="0.95"/><path d="M1 3.6 H10.4" stroke="#fff4c8" stroke-width="0.8"/></svg>
<svg class="b" style="left:92.4px;top:390.14000000000004px;" width="11.5" height="9.5" viewBox="0 0 11.5 9.5"><path d="M0.6 1.9 Q0.6 0.9 1.6 0.9 H4 L5.1 2.1 H9.8 Q10.8 2.1 10.8 3.1 V7.9 Q10.8 8.9 9.8 8.9 H1.6 Q0.6 8.9 0.6 7.9 Z" fill="#fae29a" stroke="#dcae45" stroke-width="0.95"/><path d="M1 3.6 H10.4" stroke="#fff4c8" stroke-width="0.8"/></svg>
<svg class="b" style="left:92.4px;top:403.61px;" width="11.5" height="9.5" viewBox="0 0 11.5 9.5"><path d="M0.6 1.9 Q0.6 0.9 1.6 0.9 H4 L5.1 2.1 H9.8 Q10.8 2.1 10.8 3.1 V7.9 Q10.8 8.9 9.8 8.9 H1.6 Q0.6 8.9 0.6 7.9 Z" fill="#fae29a" stroke="#dcae45" stroke-width="0.95"/><path d="M1 3.6 H10.4" stroke="#fff4c8" stroke-width="0.8"/></svg>
<svg class="b" style="left:92.4px;top:417.08000000000004px;" width="11.5" height="9.5" viewBox="0 0 11.5 9.5"><path d="M0.6 1.9 Q0.6 0.9 1.6 0.9 H4 L5.1 2.1 H9.8 Q10.8 2.1 10.8 3.1 V7.9 Q10.8 8.9 9.8 8.9 H1.6 Q0.6 8.9 0.6 7.9 Z" fill="#fae29a" stroke="#dcae45" stroke-width="0.95"/><path d="M1 3.6 H10.4" stroke="#fff4c8" stroke-width="0.8"/></svg>
<svg class="b" style="left:92.4px;top:430.55px;" width="11.5" height="9.5" viewBox="0 0 11.5 9.5"><path d="M0.6 1.9 Q0.6 0.9 1.6 0.9 H4 L5.1 2.1 H9.8 Q10.8 2.1 10.8 3.1 V7.9 Q10.8 8.9 9.8 8.9 H1.6 Q0.6 8.9 0.6 7.9 Z" fill="#fae29a" stroke="#dcae45" stroke-width="0.95"/><path d="M1 3.6 H10.4" stroke="#fff4c8" stroke-width="0.8"/></svg>
<svg class="b" style="left:78.4px;top:444.02000000000004px;" width="11.5" height="9.5" viewBox="0 0 11.5 9.5"><path d="M0.6 1.9 Q0.6 0.9 1.6 0.9 H4 L5.1 2.1 H9.8 Q10.8 2.1 10.8 3.1 V7.9 Q10.8 8.9 9.8 8.9 H1.6 Q0.6 8.9 0.6 7.9 Z" fill="#fae29a" stroke="#dcae45" stroke-width="0.95"/><path d="M1 3.6 H10.4" stroke="#fff4c8" stroke-width="0.8"/></svg>
<svg class="b" style="left:78.4px;top:457.49px;" width="11.5" height="9.5" viewBox="0 0 11.5 9.5"><path d="M0.6 1.9 Q0.6 0.9 1.6 0.9 H4 L5.1 2.1 H9.8 Q10.8 2.1 10.8 3.1 V7.9 Q10.8 8.9 9.8 8.9 H1.6 Q0.6 8.9 0.6 7.9 Z" fill="#fae29a" stroke="#dcae45" stroke-width="0.95"/><path d="M1 3.6 H10.4" stroke="#fff4c8" stroke-width="0.8"/></svg>
<svg class="b" style="left:78.4px;top:470.96000000000004px;" width="11.5" height="9.5" viewBox="0 0 11.5 9.5"><path d="M0.6 1.9 Q0.6 0.9 1.6 0.9 H4 L5.1 2.1 H9.8 Q10.8 2.1 10.8 3.1 V7.9 Q10.8 8.9 9.8 8.9 H1.6 Q0.6 8.9 0.6 7.9 Z" fill="#fae29a" stroke="#dcae45" stroke-width="0.95"/><path d="M1 3.6 H10.4" stroke="#fff4c8" stroke-width="0.8"/></svg>
<svg class="b" style="left:66.2px;top:444.72px;" width="6" height="8" viewBox="0 0 6 8"><path d="M1.6 1 L4.6 4 L1.6 7" fill="none" stroke="#a6a6a6" stroke-width="1.1" stroke-linecap="round" stroke-linejoin="round"/></svg>
<svg class="b" style="left:66.2px;top:458.19px;" width="6" height="8" viewBox="0 0 6 8"><path d="M1.6 1 L4.6 4 L1.6 7" fill="none" stroke="#a6a6a6" stroke-width="1.1" stroke-linecap="round" stroke-linejoin="round"/></svg>
<svg class="b" style="left:51.8px;top:485.13px;" width="6" height="8" viewBox="0 0 6 8"><path d="M1.6 1 L4.6 4 L1.6 7" fill="none" stroke="#a6a6a6" stroke-width="1.1" stroke-linecap="round" stroke-linejoin="round"/></svg>
<svg class="b" style="left:64px;top:483.53px;" width="11.5" height="11.5" viewBox="0 0 11.5 11.5"><path d="M0.8 2.6 V9 Q0.8 10.9 5.7 10.9 Q10.6 10.9 10.6 9 V2.6" fill="#d9d9d6" stroke="#8c8c88" stroke-width="0.9"/><ellipse cx="5.7" cy="2.6" rx="4.9" ry="1.9" fill="#ecece8" stroke="#8c8c88" stroke-width="0.9"/><path d="M0.8 5 Q5.7 7.6 10.6 5 M0.8 7.3 Q5.7 9.9 10.6 7.3" fill="none" stroke="#9a9a96" stroke-width="0.7"/><rect x="0.4" y="6.4" width="3.2" height="4.6" fill="#b98f45"/></svg>
<svg class="b" style="left:21.4px;top:498.20000000000005px;" width="12" height="9" viewBox="0 0 12 9"><path d="M0.7 7.8 V1.6 Q0.7 0.8 1.5 0.8 H3.8 L4.8 2 H8.4 V3.6" fill="none" stroke="#e0aa3a" stroke-width="1.1"/><path d="M0.8 8 L2.8 3.7 H11.2 L9.2 8 Z" fill="#fdf0b8" stroke="#e0aa3a" stroke-width="1.1" stroke-linejoin="round"/></svg>
<svg class="b" style="left:7.8px;top:520.5px;" width="6" height="7" viewBox="0 0 6 7"><path d="M4.2 1 L1.6 3.5 L4.2 6" fill="none" stroke="#555" stroke-width="1.2"/></svg>
<svg class="b" style="left:228.0px;top:520.5px;" width="6" height="7" viewBox="0 0 6 7"><path d="M1.8 1 L4.4 3.5 L1.8 6" fill="none" stroke="#555" stroke-width="1.2"/></svg>
<svg class="b" style="left:247.4px;top:59.6px;" width="10.5" height="11.5" viewBox="0 0 10.5 11.5"><rect x="0.6" y="1.4" width="7.6" height="9.4" fill="#fbfbfb" stroke="#a4abb3" stroke-width="0.8"/><rect x="0.9" y="6.6" width="7.2" height="3.4" fill="#dfe8f2"/><text x="0.7" y="10" font-family="Liberation Sans, sans-serif" font-size="4.6" font-weight="700" fill="#264f86" textLength="7.4" lengthAdjust="spacingAndGlyphs">SQL</text><path d="M9.6 0.5 L6.2 4.2 L5.8 5.4 L7 5 L10.2 1.3 Z" fill="#ecc855" stroke="#8a7430" stroke-width="0.5"/></svg>
<svg class="b" style="left:332.6px;top:59.6px;" width="10.5" height="11.5" viewBox="0 0 10.5 11.5"><rect x="0.6" y="1.4" width="7.6" height="9.4" fill="#fbfbfb" stroke="#a4abb3" stroke-width="0.8"/><rect x="0.9" y="6.6" width="7.2" height="3.4" fill="#dfe8f2"/><text x="0.7" y="10" font-family="Liberation Sans, sans-serif" font-size="4.6" font-weight="700" fill="#264f86" textLength="7.4" lengthAdjust="spacingAndGlyphs">SQL</text><path d="M9.6 0.5 L6.2 4.2 L5.8 5.4 L7 5 L10.2 1.3 Z" fill="#ecc855" stroke="#8a7430" stroke-width="0.5"/></svg>
<svg class="b" style="left:396.4px;top:61.4px;" width="8" height="8" viewBox="0 0 8 8"><path d="M1 1.8 L1.8 1 L4 3.2 L6.2 1 L7 1.8 L4.8 4 L7 6.2 L6.2 7 L4 4.8 L1.8 7 L1 6.2 L3.2 4 Z" fill="#f6f6f6" stroke="#8c8c8c" stroke-width="0.7"/></svg>
<div class="b" style="left:993.4px;top:60.6px;width:7.4px;height:2.9px;border:0.9px solid #8a8a8a;box-sizing:border-box;background:#fafafa;"></div>
<div class="b" style="left:1010.4px;top:60.6px;width:7.6px;height:7.2px;border:0.9px solid #808080;border-top-width:1.8px;box-sizing:border-box;background:#fcfcfc;"></div>
<svg class="b" style="left:254.2px;top:83.9px;" width="4" height="7" viewBox="0 0 4 7"><path d="M0.4 0.5 L3.6 3.5 L0.4 6.5 Z" fill="#1a1a1a"/></svg>
<svg class="b" style="left:800.75px;top:83.9px;" width="12.5" height="11" viewBox="0 0 12.5 11"><rect x="3.4" y="0.6" width="8.4" height="7" fill="#e9f0ea" stroke="#4d6b60" stroke-width="0.9"/><rect x="3.4" y="0.6" width="8.4" height="1.8" fill="#6d8a9a"/><path d="M6.6 3 L9.6 4.8 L6.6 6.6 Z" fill="#3f9a52"/><rect x="0.6" y="4.6" width="7.4" height="5.8" fill="#f4f8f4" stroke="#6b8a7c" stroke-width="0.8"/><path d="M0.6 6.6 H8 M0.6 8.5 H8 M3.2 4.6 V10.4 M5.6 4.6 V10.4" stroke="#8fae9e" stroke-width="0.6"/></svg>
<svg class="b" style="left:818.05px;top:84.1px;" width="8.5" height="11" viewBox="0 0 8.5 11"><ellipse cx="4.2" cy="5.8" rx="2.3" ry="3.2" fill="#4c8f4a" stroke="#2c3f2a" stroke-width="0.8"/><path d="M4.2 2.6 V1 M2.4 3.2 L1 1.6 M6 3.2 L7.4 1.6 M1.9 5.6 H0.3 M6.5 5.6 H8.1 M2.3 8 L0.9 9.8 M6.1 8 L7.5 9.8" stroke="#2c3a2a" stroke-width="0.9"/></svg>
<div class="b" style="left:830px;top:80px;width:24.5px;height:21.5px;background:#d5e0ea;"></div>
<svg class="b" style="left:836.5px;top:84.3px;" width="11" height="11" viewBox="0 0 11 11"><circle cx="5.5" cy="5.5" r="5" fill="#4f9d55" stroke="#2f7a3c" stroke-width="0.8"/><circle cx="5.5" cy="5.5" r="3.4" fill="#6fba6f"/><path d="M4 3 L8 5.5 L4 8 Z" fill="#f4fff0"/></svg>
<svg class="b" style="left:840.9px;top:89.4px;" width="9" height="12" viewBox="0 0 9 12"><path d="M0.8 0.8 V9.6 L3 7.6 L4.6 11 L6 10.4 L4.5 7.1 H7.4 Z" fill="#ffffff" stroke="#333" stroke-width="0.7" stroke-linejoin="round"/></svg>
<div class="b" style="left:827px;top:77.3px;width:30.4px;height:27px;border:3.1px solid #d1202b;box-sizing:border-box;"></div>
<svg class="b" style="left:857.1px;top:87.8px;" width="3" height="2.4" viewBox="0 0 3 2.4"><path d="M0 0.2 H3 L1.5 2.2 Z" fill="#333"/></svg>
<svg class="b" style="left:865.35px;top:83.0px;" width="8.5" height="12" viewBox="0 0 8.5 12"><path d="M4.2 0.6 V7.6 M1 3.6 V6 Q1 7.6 4.2 7.6 M7 4.2 V8.6 Q7 11 4.8 11" fill="none" stroke="#7d8790" stroke-width="1"/><circle cx="6.8" cy="8" r="1.2" fill="#cfd6dc" stroke="#6d7780" stroke-width="0.6"/></svg>
<svg class="b" style="left:883.7px;top:84.05px;" width="7" height="11.5" viewBox="0 0 7 11.5"><path d="M2.2 1.8 Q2.2 0.6 3.5 0.6 Q4.8 0.6 4.8 1.8 V6.4 Q6.2 7.2 6.2 8.6 Q6.2 10.9 3.5 10.9 Q0.8 10.9 0.8 8.6 Q0.8 7.2 2.2 6.4 Z" fill="#f7dfe0" stroke="#c32b37" stroke-width="1.1"/><circle cx="3.5" cy="8.6" r="1.5" fill="#c32b37"/><path d="M3.5 8 V3.4" stroke="#c32b37" stroke-width="1"/></svg>
<svg class="b" style="left:898.0px;top:84.3px;" width="12" height="11" viewBox="0 0 12 11"><rect x="0.8" y="2" width="7.6" height="8.4" fill="#f2f3f4" stroke="#a9b0b6" stroke-width="0.8"/><path d="M2 4 H7 M2 5.8 H7 M2 7.4 H7 M2 9 H7" stroke="#b7bec5" stroke-width="0.7"/><path d="M5.4 3.2 Q7.4 0.6 10 2" fill="none" stroke="#444" stroke-width="0.9"/><path d="M9 0.4 L11.6 2.6 L8.6 3.4 Z" fill="#333"/></svg>
<svg class="b" style="left:915.75px;top:84.25px;" width="11.5" height="11.5" viewBox="0 0 11.5 11.5"><path d="M0.7 0.7 H9.4 L10.8 2.1 V10.8 H0.7 Z" fill="#e3ebf4" stroke="#5e82ad" stroke-width="1"/><rect x="2.6" y="0.9" width="6" height="3.6" fill="#fafcfe" stroke="#7f9dc0" stroke-width="0.6"/><rect x="2.8" y="6.4" width="5.8" height="4.2" fill="#fafcfe" stroke="#7f9dc0" stroke-width="0.6"/></svg>
<svg class="b" style="left:932.8px;top:84.05px;" width="12" height="11.5" viewBox="0 0 12 11.5"><path d="M0.7 0.7 H7.6 L8.8 1.9 V8.6 H0.7 Z" fill="#e8eef5" stroke="#7f9abc" stroke-width="0.9"/><rect x="2.2" y="0.9" width="4.6" height="2.8" fill="#fafcfe" stroke="#9ab1cc" stroke-width="0.5"/><rect x="3.6" y="4.6" width="5.6" height="5" fill="#f4f7fb" stroke="#6d8cb3" stroke-width="0.8"/><circle cx="10.6" cy="10.4" r="0.8" fill="#222"/><path d="M7.6 10.6 H9" stroke="#444" stroke-width="0.8"/></svg>
<svg class="b" style="left:949.35px;top:83.85px;" width="12.5" height="11.5" viewBox="0 0 12.5 11.5"><path d="M0.7 6 V10.8 H11.8 V6 H9 V8.4 H3.4 V6 Z" fill="#5a84b6" stroke="#3b639a" stroke-width="0.8" stroke-linejoin="round"/><path d="M2.4 0.8 L6.2 5" stroke="#2a2a2a" stroke-width="1.1"/><path d="M4.2 5.6 L7.4 6.2 L6.8 3 Z" fill="#1f1f1f"/></svg>
<svg class="b" style="left:966.75px;top:83.85px;" width="12.5" height="11.5" viewBox="0 0 12.5 11.5"><path d="M0.7 6 V10.8 H11.8 V6 H9 V8.4 H3.4 V6 Z" fill="#5a84b6" stroke="#3b639a" stroke-width="0.8" stroke-linejoin="round"/><path d="M5 6.6 L9.4 2" stroke="#2a2a2a" stroke-width="1.1"/><path d="M7.4 0.8 L10.8 0.6 L10.4 4 Z" fill="#1f1f1f"/></svg>
<svg class="b" style="left:983.75px;top:84.05px;" width="12.5" height="11.5" viewBox="0 0 12.5 11.5"><rect x="0.7" y="1.4" width="10" height="9.4" fill="#f7e8a8" stroke="#b9a05a" stroke-width="0.8"/><rect x="0.7" y="1.4" width="10" height="2.2" fill="#5f86b4"/><path d="M4 3.6 V10.8 M7.2 3.6 V10.8 M0.7 7 H10.7" stroke="#c9b673" stroke-width="0.7"/><path d="M8.4 1.2 L12 3.6 L8.4 6 Z" fill="#3f8a50"/><rect x="4.4" y="7.4" width="2.6" height="3" fill="#e9a040"/></svg>
<svg class="b" style="left:1001.1px;top:82.9px;" width="13" height="13" viewBox="0 0 13 13"><circle cx="6.5" cy="6.5" r="5.5" fill="#fcfcfc" stroke="#5a5a5a" stroke-width="1.3"/><path d="M7.6 3.8 L5.2 6.5 L7.6 9" fill="none" stroke="#555" stroke-width="1.1"/></svg>
<svg class="b" style="left:1000.1px;top:106.4px;" width="7" height="6" viewBox="0 0 7 6"><path d="M1 4.4 L3.5 1.8 L6 4.4" fill="none" stroke="#b4b4b4" stroke-width="1.1"/></svg>
<svg class="b" style="left:1000.1px;top:346.4px;" width="7" height="6" viewBox="0 0 7 6"><path d="M1 1.6 L3.5 4.2 L6 1.6" fill="none" stroke="#b4b4b4" stroke-width="1.1"/></svg>
<svg class="b" style="left:274.4px;top:358.3px;" width="6" height="7" viewBox="0 0 6 7"><path d="M4.2 1 L1.6 3.5 L4.2 6" fill="none" stroke="#b8b8b8" stroke-width="1.2"/></svg>
<svg class="b" style="left:987.6px;top:358.3px;" width="6" height="7" viewBox="0 0 6 7"><path d="M1.8 1 L4.4 3.5 L1.8 6" fill="none" stroke="#b8b8b8" stroke-width="1.2"/></svg>
<svg class="b" style="left:250px;top:375.4px;" width="10.5" height="11.5" viewBox="0 0 10.5 11.5"><rect x="0.6" y="4.4" width="7.4" height="6.4" fill="#eef2f6" stroke="#8a98a8" stroke-width="0.8"/><text x="0.8" y="9.8" font-family="Liberation Sans, sans-serif" font-size="4.6" font-weight="700" fill="#264f86" textLength="7" lengthAdjust="spacingAndGlyphs">SQL</text><path d="M9.2 0.5 L5.2 4.8 L4.8 6 L6 5.6 L9.9 1.3 Z" fill="#ecc855" stroke="#8a7430" stroke-width="0.5"/><path d="M1.4 3.6 L3 1.2" stroke="#999" stroke-width="0.7"/></svg>
<svg class="b" style="left:294.6px;top:375.8px;" width="9" height="11" viewBox="0 0 9 11"><path d="M0.7 0.7 H5.8 L8.2 3.1 V10.3 H0.7 Z" fill="#fbfbfb" stroke="#8f959b" stroke-width="0.8"/><path d="M2.2 3.4 H5 M2.2 5.2 H6.6 M2.2 7 H6.6" stroke="#a9afb5" stroke-width="0.7"/></svg>
<svg class="b" style="left:369.4px;top:376.2px;" width="11.5" height="10.5" viewBox="0 0 11.5 10.5"><rect x="0.6" y="0.6" width="9.6" height="8.6" fill="#f6f8fa" stroke="#7e8a96" stroke-width="0.8"/><rect x="0.6" y="0.6" width="9.6" height="1.7" fill="#8a9bb0"/><rect x="5.6" y="4.6" width="4" height="5" rx="1" fill="#f8f8f8" stroke="#49627f" stroke-width="1"/></svg>
<svg class="b" style="left:429.2px;top:376px;" width="11.5" height="10.5" viewBox="0 0 11.5 10.5"><rect x="0.6" y="0.6" width="10" height="9" fill="#f6f6f6" stroke="#8c8c8c" stroke-width="0.8"/><rect x="1.8" y="2" width="2" height="2" fill="none" stroke="#666" stroke-width="0.6"/><rect x="1.8" y="5.8" width="2" height="2" fill="none" stroke="#666" stroke-width="0.6"/><path d="M5 3 H9.4 M5 6.8 H9.4" stroke="#8a8a8a" stroke-width="0.7"/></svg>
<svg class="b" style="left:515.2px;top:375.2px;" width="12" height="11.5" viewBox="0 0 12 11.5"><rect x="0.6" y="5" width="2" height="5.8" fill="#8fb0d8" stroke="#5d82b0" stroke-width="0.5"/><rect x="3.4" y="3" width="2" height="7.8" fill="#f2c94e" stroke="#c59a28" stroke-width="0.5"/><rect x="6.2" y="6" width="2" height="4.8" fill="#d98a8a" stroke="#b05a5a" stroke-width="0.5"/><path d="M10.6 0.5 L6.6 5 L6.2 6.2 L7.4 5.8 L11.2 1.3 Z" fill="#ecc855" stroke="#8a7430" stroke-width="0.5"/></svg>
<svg class="b" style="left:247.4px;top:400.4px;" width="11" height="9.5" viewBox="0 0 11 9.5"><rect x="0.6" y="0.6" width="9.6" height="8" fill="#f7f8f9" stroke="#7d8791" stroke-width="0.9"/><rect x="0.6" y="0.6" width="9.6" height="2" fill="#9aa6b2"/><path d="M3.2 2.6 V8.6" stroke="#b3bcc5" stroke-width="0.6"/></svg>
<svg class="b" style="left:330.4px;top:400.4px;" width="11" height="9.5" viewBox="0 0 11 9.5"><rect x="0.6" y="0.6" width="9.6" height="8" fill="#f7f8f9" stroke="#7d8791" stroke-width="0.9"/><rect x="0.6" y="0.6" width="9.6" height="2" fill="#9aa6b2"/><path d="M3.2 2.6 V8.6" stroke="#b3bcc5" stroke-width="0.6"/></svg>
<svg class="b" style="left:312.4px;top:400.2px;" width="8" height="8" viewBox="0 0 8 8"><path d="M1 1.8 L1.8 1 L4 3.2 L6.2 1 L7 1.8 L4.8 4 L7 6.2 L6.2 7 L4 4.8 L1.8 7 L1 6.2 L3.2 4 Z" fill="#f6f6f6" stroke="#8c8c8c" stroke-width="0.7"/></svg>
<svg class="b" style="left:870.15px;top:399.4px;" width="12.5" height="10" viewBox="0 0 12.5 10"><path d="M0.8 5 L5.4 0.9 V3 H10.6 Q11.6 3 11.6 4 V6 Q11.6 7 10.6 7 H5.4 V9.1 Z" fill="#fcefb0" stroke="#d8a52a" stroke-width="1.1" stroke-linejoin="round"/></svg>
<svg class="b" style="left:887.3px;top:399.9px;" width="11" height="9" viewBox="0 0 11 9"><path d="M10.2 4.5 L6.2 0.9 V2.8 H1 V6.2 H6.2 V8.1 Z" fill="#f8f8f8" stroke="#cfcfcf" stroke-width="0.9" stroke-linejoin="round"/></svg>
<svg class="b" style="left:904.5px;top:399.1px;" width="13" height="11" viewBox="0 0 13 11"><path d="M0.6 2.4 H6 M0.6 8.4 H6" stroke="#333" stroke-width="1.2"/><path d="M3.4 0.6 V4.2 M3.4 6.6 V10.4 M6 0.6 V4.2 M6 6.6 V10.4" stroke="#2b2b2b" stroke-width="1"/><path d="M5.6 5.4 H9.2 M8.4 2.4 L12 5.4 L8.4 8.4" fill="none" stroke="#e0a82a" stroke-width="1.5" stroke-linejoin="round"/></svg>
<svg class="b" style="left:921.5px;top:398.9px;" width="13" height="11" viewBox="0 0 13 11"><path d="M0.7 0.7 H6.4 V2.6 H0.7 Z" fill="#4f7fb0" stroke="#3a6896" stroke-width="0.7"/><rect x="0.7" y="2.6" width="11.6" height="7.8" fill="#eef4fa" stroke="#4a78a8" stroke-width="1"/><rect x="2.6" y="5" width="7.6" height="2.4" fill="#b8cde2"/></svg>
<svg class="b" style="left:940.65px;top:399.1px;" width="9.5" height="11" viewBox="0 0 9.5 11"><path d="M0.7 0.7 H6 L8.6 3.3 V10.3 H0.7 Z" fill="#f4f4f4" stroke="#9a9a9a" stroke-width="0.8"/><path d="M2 3.6 H6 M2 5.4 H7.2 M2 7.2 H7.2 M2 8.8 H7.2" stroke="#aeaeae" stroke-width="0.7"/></svg>
<svg class="b" style="left:956.55px;top:399.1px;" width="12.5" height="11" viewBox="0 0 12.5 11"><rect x="0.6" y="0.6" width="11.2" height="9.8" fill="#f5f6f7" stroke="#78828c" stroke-width="0.9"/><rect x="2" y="2.2" width="2.4" height="2.4" fill="none" stroke="#5b646d" stroke-width="0.7"/><rect x="2" y="6.2" width="2.4" height="2.4" fill="none" stroke="#5b646d" stroke-width="0.7"/><path d="M5.6 3.4 H10.4 M5.6 7.4 H10.4" stroke="#8e98a2" stroke-width="0.8"/></svg>
<svg class="b" style="left:973.75px;top:397.75px;" width="12.5" height="12.5" viewBox="0 0 12.5 12.5"><rect x="0.6" y="0.6" width="6.4" height="5.6" fill="#7f9fc8" stroke="#3f639a" stroke-width="0.9"/><rect x="5.6" y="6.2" width="6.2" height="5.6" fill="#dbe7f4" stroke="#3f639a" stroke-width="0.9"/><rect x="5.6" y="6.2" width="6.2" height="1.6" fill="#4f78ac"/><path d="M3.6 6.6 V9 H5.4" fill="none" stroke="#d9a62a" stroke-width="1.1"/><rect x="2.6" y="5.6" width="3" height="1.6" fill="#f0cf5a"/></svg>
<div class="b" style="left:993px;top:400px;width:7.6px;height:2.8px;border:0.9px solid #8a8a8a;box-sizing:border-box;background:#fafafa;"></div>
<div class="b" style="left:1010.2px;top:400px;width:7.6px;height:7.2px;border:0.9px solid #808080;border-top-width:1.8px;box-sizing:border-box;background:#fcfcfc;"></div>
<svg class="b" style="left:1008.5px;top:424.4px;" width="7" height="6" viewBox="0 0 7 6"><path d="M1 4.4 L3.5 1.8 L6 4.4" fill="none" stroke="#444" stroke-width="1.1"/></svg>
<svg class="b" style="left:1008.5px;top:468.8px;" width="7" height="6" viewBox="0 0 7 6"><path d="M1 1.6 L3.5 4.2 L6 1.6" fill="none" stroke="#444" stroke-width="1.1"/></svg>
<svg class="b" style="left:253.6px;top:481.1px;" width="6" height="7" viewBox="0 0 6 7"><path d="M4.2 1 L1.6 3.5 L4.2 6" fill="none" stroke="#444" stroke-width="1.2"/></svg>
<svg class="b" style="left:996.0px;top:481.1px;" width="6" height="7" viewBox="0 0 6 7"><path d="M1.8 1 L4.4 3.5 L1.8 6" fill="none" stroke="#444" stroke-width="1.2"/></svg>
<svg class="b" style="left:284.7px;top:518.2px;" width="9" height="8" viewBox="0 0 9 8"><path d="M0.8 4.4 L3.2 7 L8.2 0.8" fill="none" stroke="#2f4f9a" stroke-width="1.3"/></svg>
<svg class="b" style="left:9.3px;top:557.6px;" width="13" height="12" viewBox="0 0 13 12"><path d="M0 1.8 L5.8 1 V5.7 H0 Z M6.6 0.9 L13 0 V5.7 H6.6 Z M0 6.4 H5.8 V11.1 L0 10.3 Z M6.6 6.4 H13 V12 L6.6 11.1 Z" fill="#ffffff"/></svg>
<svg class="b" style="left:34.5px;top:557.4px;" width="13" height="14" viewBox="0 0 13 14"><circle cx="8.4" cy="4.8" r="3.6" fill="none" stroke="#f0f0f0" stroke-width="1.3"/><path d="M5.8 7.6 L0.9 13" stroke="#f0f0f0" stroke-width="1.4"/></svg>
<svg class="b" style="left:61.6px;top:558.3px;" width="16" height="11" viewBox="0 0 16 11"><rect x="3.6" y="0.8" width="8.8" height="9.4" fill="none" stroke="#d8d8d8" stroke-width="1.1"/><path d="M1.9 2.2 H0.9 V8.8 H1.9 M14.1 2.2 H15.1 V8.8 H14.1" fill="none" stroke="#d0d0d0" stroke-width="1"/></svg>
<svg class="b" style="left:92.6px;top:557.6px;" width="12" height="12" viewBox="0 0 12 12"><path d="M0.8 6.6 Q0.8 1 6.2 0.8 Q11.4 0.8 11.4 6.6 H4.2 Q4.4 9.4 7.4 9.4 Q9.4 9.4 11 8.4 V10.8 Q9.4 11.6 7 11.6 Q1.6 11.6 1.6 6.4 Q1.8 3.6 4.4 2.8 Q8 2.4 8.2 4.8 H4.2 Q4.2 3.4 2.6 4.6 Q1.4 5.6 0.8 6.6 Z" fill="#2f7bd0"/></svg>
<svg class="b" style="left:120.35px;top:558.35px;" width="12.5" height="10.5" viewBox="0 0 12.5 10.5"><path d="M0.4 1 Q0.4 0.3 1.1 0.3 H4.2 L5.2 1.5 H11.4 Q12.1 1.5 12.1 2.2 V9.6 Q12.1 10.3 11.4 10.3 H1.1 Q0.4 10.3 0.4 9.6 Z" fill="#f6e9ae"/><rect x="2" y="5" width="8.4" height="5.3" fill="#5fb4c4"/><rect x="4" y="7.2" width="4.4" height="3.1" fill="#e8f4f8"/></svg>
<svg class="b" style="left:147.75px;top:557.8px;" width="12.5" height="12" viewBox="0 0 12.5 12"><path d="M3.8 3.4 Q3.8 0.7 6.2 0.7 Q8.6 0.7 8.6 3.4" fill="none" stroke="#d8d8d8" stroke-width="1"/><path d="M0.4 3 H12.1 L11.5 11.6 H1 Z" fill="#f6f6f6"/><rect x="4.1" y="5" width="1.8" height="1.8" fill="#e0533a"/><rect x="6.5" y="5" width="1.8" height="1.8" fill="#6db33f"/><rect x="4.1" y="7.4" width="1.8" height="1.8" fill="#2e8ad8"/><rect x="6.5" y="7.4" width="1.8" height="1.8" fill="#f0b428"/></svg>
<svg class="b" style="left:176.3px;top:558.0px;" width="12" height="12" viewBox="0 0 12 12"><circle cx="6" cy="6" r="5.7" fill="#e04a3a"/><path d="M6 6 L1.1 3.2 A5.7 5.7 0 0 0 6 11.7 Z" fill="#3fa554"/><path d="M6 6 L6 11.7 A5.7 5.7 0 0 0 10.9 3.2 Z" fill="#f2c53a"/><path d="M6 6 L1.1 3.2 A5.7 5.7 0 0 1 10.9 3.2 Z" fill="#e04a3a"/><circle cx="6" cy="6" r="2.6" fill="#f4f4f4"/><circle cx="6" cy="6" r="2" fill="#4a86e0"/></svg>
<svg class="b" style="left:204.7px;top:558.05px;" width="11" height="11.5" viewBox="0 0 11 11.5"><path d="M5.5 0.4 L10.6 2.4 V8.8 L5.5 11.1 L0.4 8.8 V2.4 Z" fill="#a9c3e4"/><path d="M5.5 4.6 L10.6 2.4 V8.8 L5.5 11.1 Z" fill="#c8dbf2"/><path d="M5.5 0.4 L10.6 2.4 L5.5 4.6 L0.4 2.4 Z" fill="#dce8f8"/></svg>
<div class="b" style="left:231px;top:557.4px;width:13px;height:11.8px;background:#3fae3c;border-radius:2px;"></div>
<svg class="b" style="left:233.35px;top:559.0px;" width="8.5" height="7.6" viewBox="0 0 8.5 7.6"><ellipse cx="4.2" cy="3.2" rx="4" ry="3" fill="#f0fff0"/><path d="M2.6 5.4 L2.2 7.4 L5 5.8 Z" fill="#f0fff0"/></svg>
<svg class="b" style="left:258.95px;top:557.75px;" width="12.5" height="12.5" viewBox="0 0 12.5 12.5"><circle cx="6.2" cy="6.2" r="6" fill="#5c8fc4"/><circle cx="6.2" cy="6.2" r="6" fill="none" stroke="#3d6a9c" stroke-width="0.6"/><rect x="2.6" y="3.4" width="7.2" height="5.6" rx="0.8" fill="#dcebf8"/><rect x="3.6" y="5.2" width="5.2" height="2.6" fill="#6c9bd0"/></svg>
<svg class="b" style="left:287.05px;top:559.0px;" width="12.5" height="9.6" viewBox="0 0 12.5 9.6"><path d="M0.3 3 L6.2 0.2 L12.2 3 V9.3 H0.3 Z" fill="#f4f4f4"/><path d="M1.6 3.2 H10.9 L6.2 6.4 Z" fill="#1a1414"/></svg>
<svg class="b" style="left:314.75px;top:557.75px;" width="12.5" height="12.5" viewBox="0 0 12.5 12.5"><circle cx="6.2" cy="6.2" r="6" fill="#4fae74"/><circle cx="6.2" cy="6.2" r="3.8" fill="#9ad9b0"/><path d="M6.2 1.6 V10.8 M2.4 4.4 H10 M2.4 8 H10" stroke="#d8f4e2" stroke-width="0.6"/></svg>
<svg class="b" style="left:343.1px;top:558.0px;" width="11" height="11.6" viewBox="0 0 11 11.6"><rect x="0.3" y="0.3" width="10.4" height="11" fill="#4a3a30"/><path d="M0.3 1.6 H10.7 M0.3 10 H10.7" stroke="#8a7a6a" stroke-width="0.9" stroke-dasharray="1.1 1"/><path d="M5.5 2.6 L6.4 4.8 L8.8 5 L7 6.5 L7.6 8.8 L5.5 7.5 L3.4 8.8 L4 6.5 L2.2 5 L4.6 4.8 Z" fill="#f6e08a"/><circle cx="5.5" cy="5.8" r="1.2" fill="#fff8e0"/></svg>
<svg class="b" style="left:369.75px;top:557.75px;" width="12.5" height="12.5" viewBox="0 0 12.5 12.5"><circle cx="6.2" cy="6.2" r="6" fill="#5c8fc4"/><circle cx="6.2" cy="6.2" r="6" fill="none" stroke="#3d6a9c" stroke-width="0.6"/><rect x="2.6" y="3.4" width="7.2" height="5.6" rx="0.8" fill="#dcebf8"/><rect x="3.6" y="5.2" width="5.2" height="2.6" fill="#6c9bd0"/></svg>
<svg class="b" style="left:803.4px;top:557.2px;" width="12" height="12" viewBox="0 0 12 12"><circle cx="3.8" cy="5" r="1.9" fill="none" stroke="#f0f0f0" stroke-width="1"/><path d="M0.6 11.4 Q0.8 7.6 3.8 7.6 Q6.8 7.6 7 11.4" fill="none" stroke="#f0f0f0" stroke-width="1"/><circle cx="8.6" cy="2.4" r="1.7" fill="none" stroke="#f0f0f0" stroke-width="1"/><path d="M7 5.4 Q8 4.6 8.8 4.7 Q11.2 4.8 11.4 8" fill="none" stroke="#f0f0f0" stroke-width="1"/></svg>
<svg class="b" style="left:826.4px;top:560.8px;" width="10" height="6" viewBox="0 0 10 6"><path d="M0.8 5.2 L5 1 L9.2 5.2" fill="none" stroke="#f0f0f0" stroke-width="1.2"/></svg>
<svg class="b" style="left:842.5px;top:556.6px;" width="14" height="14" viewBox="0 0 14 14"><circle cx="7" cy="7" r="5.9" fill="#4a161b" stroke="#ecdcdc" stroke-width="1.3"/><circle cx="7" cy="7" r="4" fill="#d8323f"/></svg>
<svg class="b" style="left:860.4px;top:556.6px;" width="14" height="14" viewBox="0 0 14 14"><circle cx="7" cy="7" r="5.9" fill="#4a161b" stroke="#ecdcdc" stroke-width="1.3"/><circle cx="7" cy="7" r="4" fill="#d8323f"/><rect x="8" y="9" width="5.4" height="3.6" fill="#f4f4f4"/></svg>
<svg class="b" style="left:881.3px;top:558.9px;" width="11" height="11" viewBox="0 0 11 11"><path d="M1 10.4 A9.4 9.4 0 0 1 10.4 1" fill="none" stroke="#b8b8b8" stroke-width="1"/><path d="M3.6 10.4 A6.8 6.8 0 0 1 10.4 3.6" fill="none" stroke="#c8c8c8" stroke-width="1"/><path d="M6.2 10.4 A4.2 4.2 0 0 1 10.4 6.2" fill="none" stroke="#e0e0e0" stroke-width="1"/><circle cx="9.6" cy="9.6" r="1.1" fill="#f0f0f0"/></svg>
<svg class="b" style="left:896.9px;top:559.3px;" width="13" height="9" viewBox="0 0 13 9"><rect x="3.6" y="2" width="8" height="5.6" fill="none" stroke="#f0f0f0" stroke-width="1"/><rect x="11.8" y="3.6" width="1" height="2.4" fill="#f0f0f0"/><path d="M0.8 0.6 V3.4 H2.8 M1 0.6 H2.6 M2.6 0.6 V2" fill="none" stroke="#f0f0f0" stroke-width="0.9"/><rect x="4.6" y="3" width="2.4" height="3.6" fill="#f0f0f0"/></svg>
<svg class="b" style="left:914.55px;top:558.8px;" width="12.5" height="10" viewBox="0 0 12.5 10"><path d="M0.7 3.4 H2.6 L5.2 0.8 V9.2 L2.6 6.6 H0.7 Z" fill="none" stroke="#f0f0f0" stroke-width="1" stroke-linejoin="round"/><path d="M7.6 3 L11.6 7 M11.6 3 L7.6 7" stroke="#f0f0f0" stroke-width="1"/></svg>
<svg class="b" style="left:995.15px;top:557.8px;" width="12.5" height="12" viewBox="0 0 12.5 12"><path d="M0.4 0.4 H12.1 V9 H8 L6.4 11.4 L4.8 9 H0.4 Z" fill="#f6f6f6"/><path d="M2.4 2.8 H10 M2.4 4.8 H10 M2.4 6.6 H7.4" stroke="#222" stroke-width="0.8"/></svg>
</div></div>
</body></html>
